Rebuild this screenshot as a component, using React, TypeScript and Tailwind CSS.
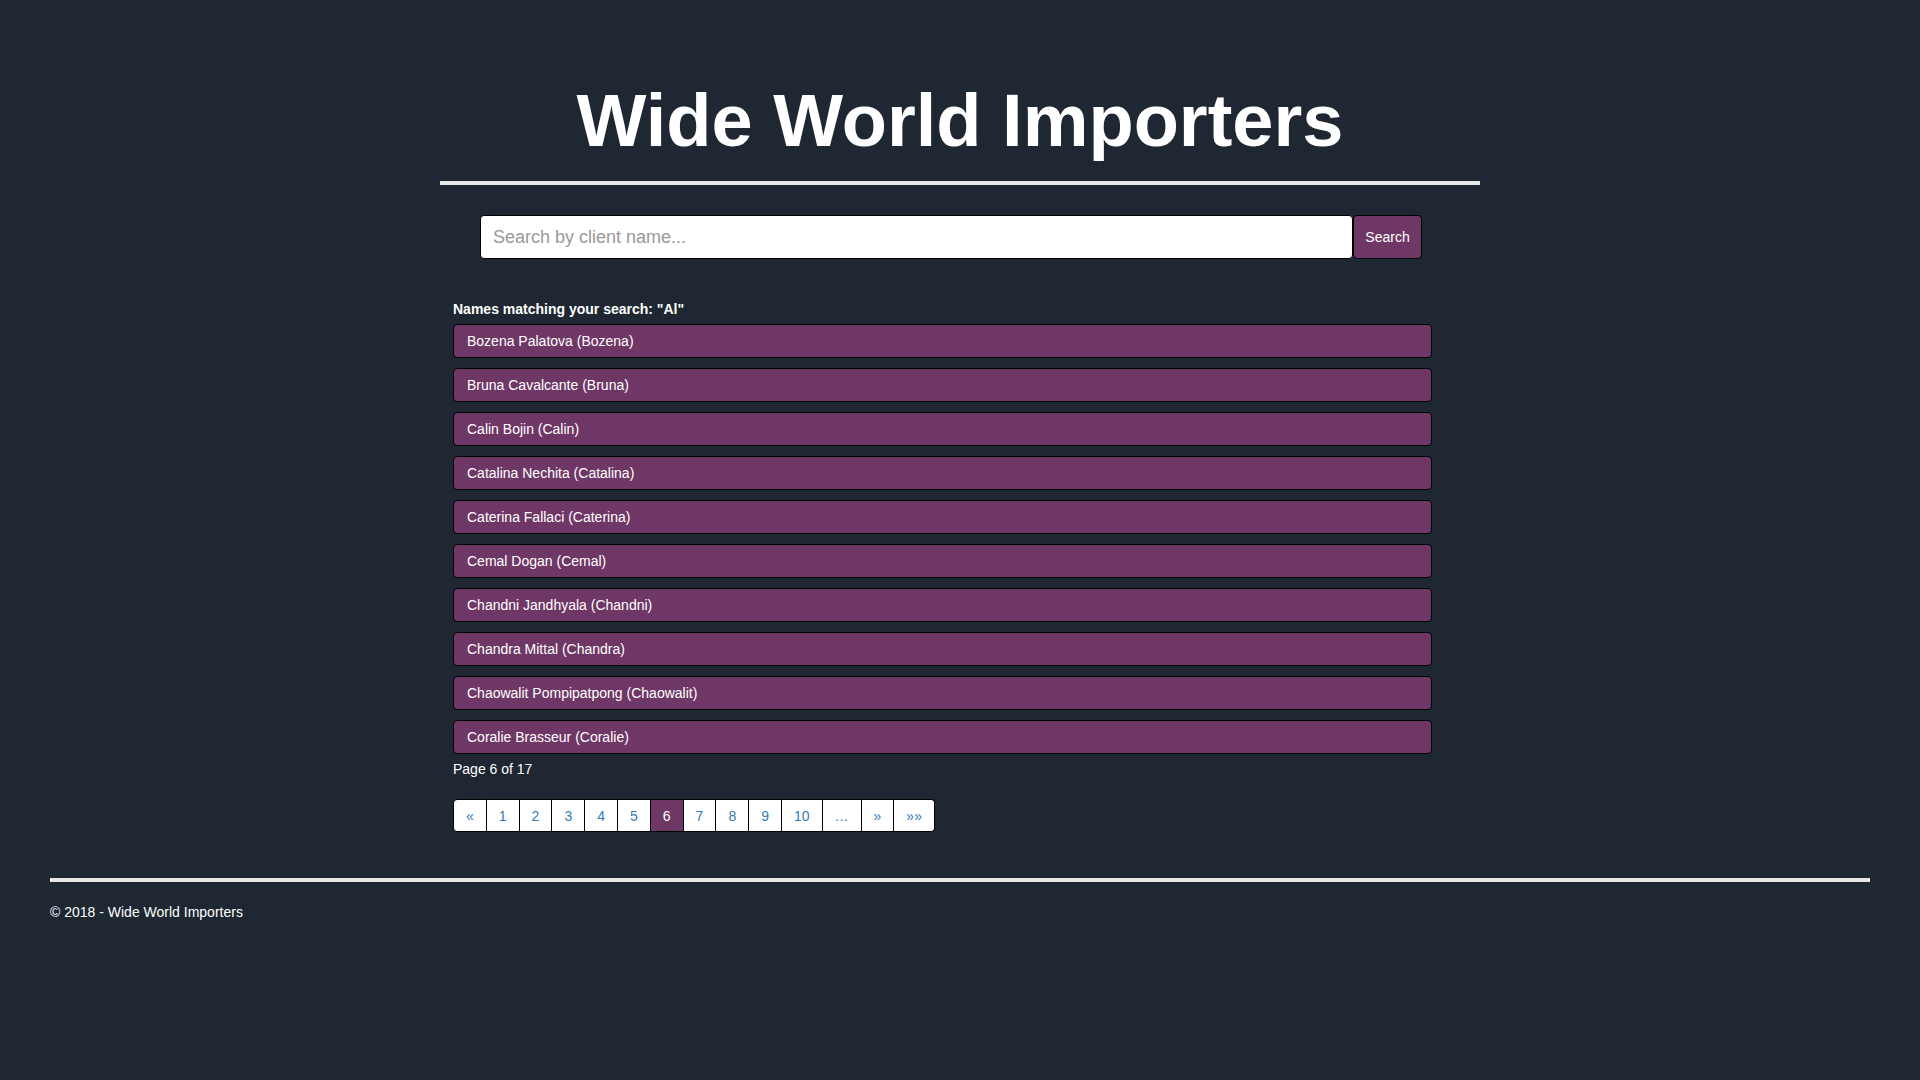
import React from "react";

const clients = [
  "Bozena Palatova (Bozena)",
  "Bruna Cavalcante (Bruna)",
  "Calin Bojin (Calin)",
  "Catalina Nechita (Catalina)",
  "Caterina Fallaci (Caterina)",
  "Cemal Dogan (Cemal)",
  "Chandni Jandhyala (Chandni)",
  "Chandra Mittal (Chandra)",
  "Chaowalit Pompipatpong (Chaowalit)",
  "Coralie Brasseur (Coralie)",
];

const pages = ["«", "1", "2", "3", "4", "5", "6", "7", "8", "9", "10", "…", "»", "»»"];

export default function App() {
  return (
    <div className="min-h-screen w-full bg-[#1e2732] text-white font-['Liberation_Sans',Arial,sans-serif] text-[14px] leading-[20px]">
      {/* Header */}
      <div className="w-[1040px] mx-auto pt-[84px]">
        <h1 className="text-center text-[74px] leading-none font-bold">Wide World Importers</h1>
        <div className="mt-[23px] h-[4px] bg-[#e6e6e6]" />

        {/* Search */}
        <form className="mt-[30px] ml-[40px] flex w-[942px] h-[44px]" onSubmit={(e) => e.preventDefault()}>
          <input
            type="text"
            placeholder="Search by client name..."
            className="w-[873px] h-full bg-white border border-black rounded-[4px] px-[12px] text-[18px] text-black placeholder:text-[#999999] outline-none"
          />
          <button
            type="submit"
            className="w-[69px] h-full bg-[#6f3766] border border-black rounded-[4px] text-white text-[14px]"
          >
            Search
          </button>
        </form>

        {/* Results */}
        <div className="mt-[40px] ml-[13px] w-[979px]">
          <p className="font-bold">Names matching your search: "Al"</p>
          <div className="mt-[5px] flex flex-col gap-[10px]">
            {clients.map((c) => (
              <div
                key={c}
                className="h-[34px] px-[13px] flex items-center bg-[#6f3766] border border-black rounded-[4px]"
              >
                {c}
              </div>
            ))}
          </div>
          <p className="mt-[5px]">Page 6 of 17</p>

          {/* Pagination */}
          <div className="mt-[20px] flex">
            {pages.map((p, i) => (
              <a
                key={i}
                href="#"
                className={
                  "h-[33px] px-[12px] flex items-center border-y border-r border-black " +
                  (i === 0 ? "border-l rounded-l-[4px] " : "") +
                  (i === pages.length - 1 ? "rounded-r-[4px] " : "") +
                  (p === "6" ? "bg-[#6f3766] text-white" : "bg-white text-[#337ab7]")
                }
              >
                {p}
              </a>
            ))}
          </div>
        </div>
      </div>

      {/* Footer */}
      <div className="px-[50px] mt-[46px] pb-[40px]">
        <div className="h-[4px] bg-[#e6e6e6]" />
        <p className="mt-[20px]">© 2018 - Wide World Importers</p>
      </div>
    </div>
  );
}
